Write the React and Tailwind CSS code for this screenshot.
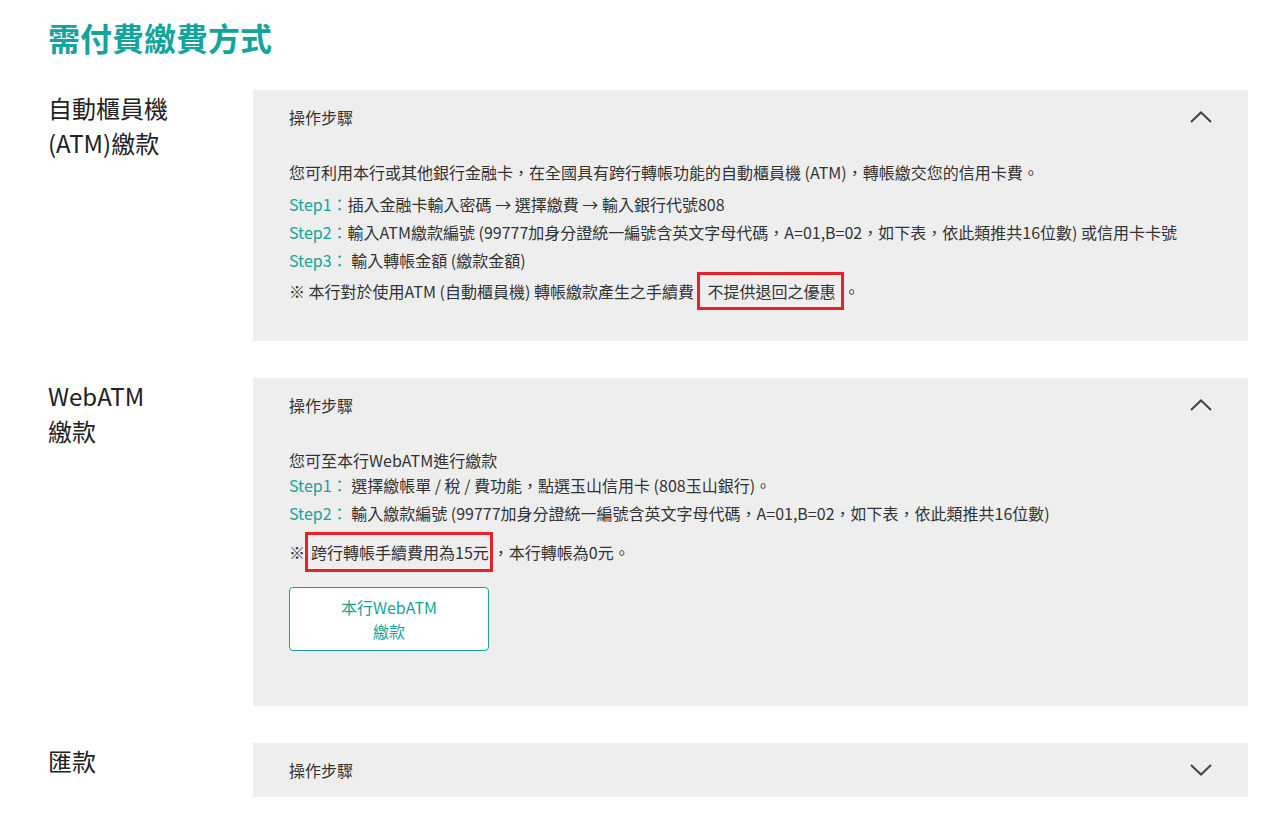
import { useState } from 'react';

const FONT = "font-['Noto_Sans_CJK_TC','Noto_Sans',sans-serif]";

const Chevron = ({ open }) => (
  <svg width="22" height="12" viewBox="0 0 22 12" fill="none" className="shrink-0">
    {open ? (
      <polyline points="1,11 11,1.5 21,11" stroke="#444" strokeWidth="2" />
    ) : (
      <polyline points="1,1 11,10.5 21,1" stroke="#444" strokeWidth="2" />
    )}
  </svg>
);

const Highlight = ({ children, className = '' }) => (
  <span className={`inline-block border-[3px] border-[#e8202a] leading-[28px] ${className}`}>
    {children}
  </span>
);

const Step = ({ label, children, className = '' }) => (
  <p className={`leading-[28px] ${className}`}>
    <span className="text-[#16a39b]">{label}</span>
    {children}
  </p>
);

const Panel = ({ open, onToggle, children }) => (
  <div className="bg-[#eeeeee]">
    <button
      type="button"
      onClick={onToggle}
      className="w-full h-[54px] flex items-center justify-between pl-9 pr-[36px] text-left"
    >
      <span className="text-base text-[#333]">操作步驟</span>
      <Chevron open={open} />
    </button>
    {open && children}
  </div>
);

const Row = ({ label, children }) => (
  <div className="grid grid-cols-[205px_1fr] items-start">
    <div className="text-2xl leading-[35px] text-[#222]">{label}</div>
    {children}
  </div>
);

export default function App() {
  const [open, setOpen] = useState({ atm: true, web: true, wire: false });
  const toggle = (k) => setOpen((p) => ({ ...p, [k]: !p[k] }));

  return (
    <div className={`${FONT} bg-white min-h-screen pl-12 pr-[21px] pt-[17px] text-[#333]`}>
      <h1 className="text-[32px] leading-[40px] font-bold text-[#16a39b] mb-[33px]">需付費繳費方式</h1>

      <div className="flex flex-col gap-[37px]">
        <Row label={<>自動櫃員機<br />(ATM)繳款</>}>
          <Panel open={open.atm} onToggle={() => toggle('atm')}>
            <div className="px-9 pt-[14px] pb-[31px] text-base">
              <p className="leading-[28px] mb-1">
                您可利用本行或其他銀行金融卡，在全國具有跨行轉帳功能的自動櫃員機 (ATM)，轉帳繳交您的信用卡費。
              </p>
              <Step label="Step1：">插入金融卡輸入密碼 → 選擇繳費 → 輸入銀行代號808</Step>
              <Step label="Step2：">輸入ATM繳款編號 (99777加身分證統一編號含英文字母代碼，A=01,B=02，如下表，依此類推共16位數) 或信用卡卡號</Step>
              <Step label="Step3："> 輸入轉帳金額 (繳款金額)</Step>
              <p className="leading-[28px] -mt-[2px]">
                ※ 本行對於使用ATM (自動櫃員機) 轉帳繳款產生之手續費 <Highlight className="pl-[7px] pr-[5px] py-[2px]">不提供退回之優惠</Highlight>。
              </p>
            </div>
          </Panel>
        </Row>

        <Row label={<>WebATM<br />繳款</>}>
          <Panel open={open.web} onToggle={() => toggle('web')}>
            <div className="px-9 pt-[17px] pb-[55px] text-base">
              <p className="leading-[22px]">您可至本行WebATM進行繳款</p>
              <Step label="Step1：">  選擇繳帳單 / 稅 / 費功能，點選玉山信用卡 (808玉山銀行)。</Step>
              <Step label="Step2：">  輸入繳款編號 (99777加身分證統一編號含英文字母代碼，A=01,B=02，如下表，依此類推共16位數)</Step>
              <p className="leading-[28px] mt-[5px]">
                ※<Highlight className="pl-[3px] pr-[1px] py-[3px]">跨行轉帳手續費用為15元</Highlight>，本行轉帳為0元。
              </p>
              <button
                type="button"
                className="mt-[15px] w-[200px] h-[64px] bg-white border border-[#16a39b] rounded-[4px] text-[#16a39b] text-base leading-[24px]"
              >
                本行WebATM<br />繳款
              </button>
            </div>
          </Panel>
        </Row>

        <Row label="匯款">
          <Panel open={open.wire} onToggle={() => toggle('wire')}>
            <div className="px-9 pb-6 text-base leading-[28px]">
              <p>請匯款至本行指定帳戶。</p>
            </div>
          </Panel>
        </Row>
      </div>
    </div>
  );
}
